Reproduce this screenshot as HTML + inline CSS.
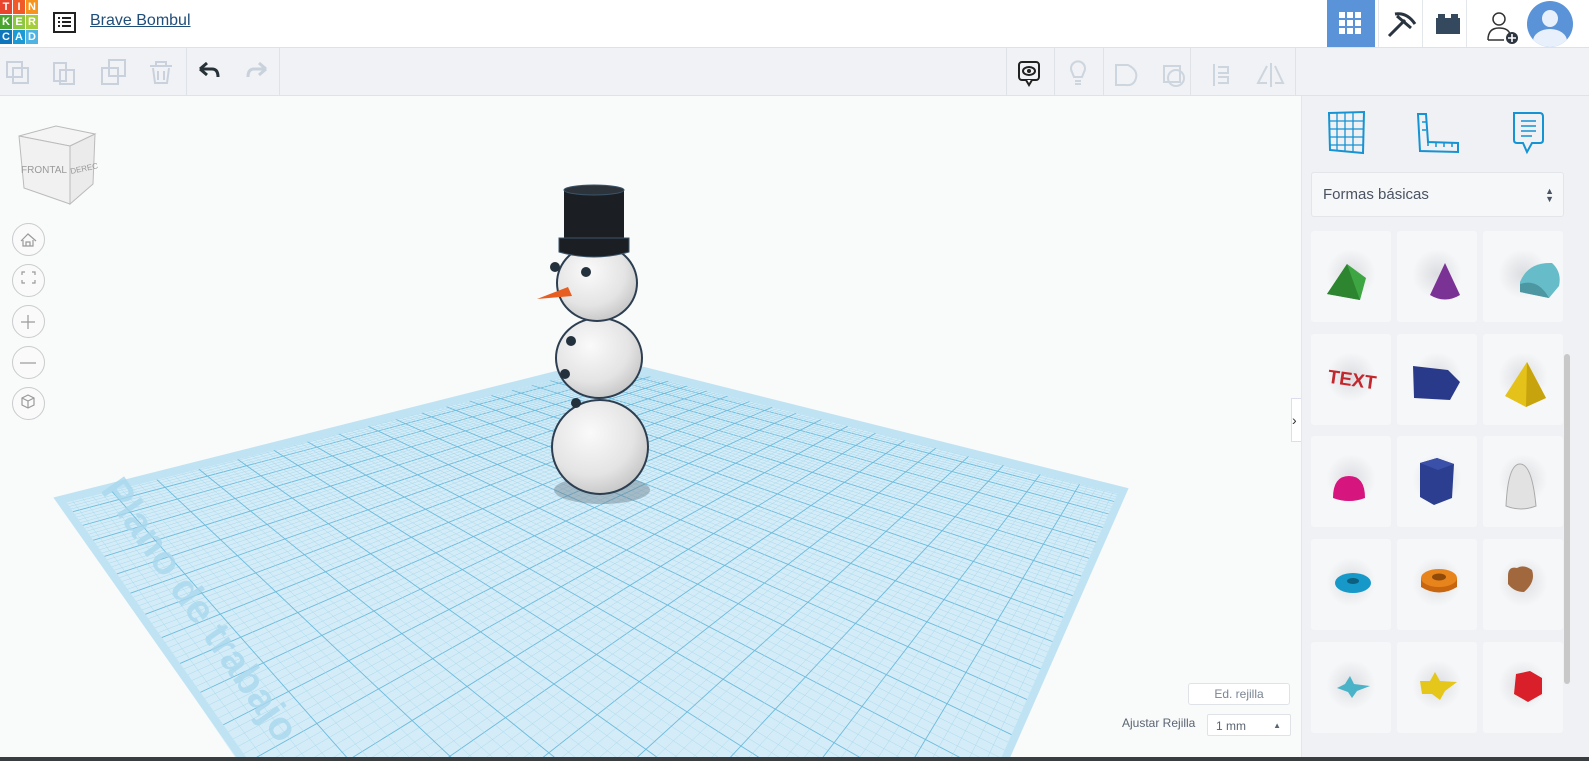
<!DOCTYPE html>
<html><head><meta charset="utf-8"><style>
*{box-sizing:border-box;margin:0;padding:0}
html{overflow:hidden;width:1589px;height:761px}
body{width:1589px;height:761px;overflow:hidden;background:#f9fafa;font-family:"Liberation Sans",sans-serif;position:relative}
.hdr{position:absolute;left:0;top:0;width:1589px;height:48px;background:#fff;border-bottom:1px solid #dde2e8}
.tb{position:absolute;left:0;top:48px;width:1589px;height:48px;background:#f1f2f5;border-bottom:1px solid #dfe3e8}
.logo{position:absolute;left:0;top:0;width:39px;height:45px}
.logo div{position:absolute;width:12px;height:14px;color:#fff;font-weight:bold;font-size:11px;text-align:center;line-height:14px}
.btn{position:absolute;top:56px;height:32px;border:1px solid #dde1e6;border-radius:3px;background:#f3f4f7;font-size:15px;color:#4a5361;text-align:center;line-height:30px}
.panel{position:absolute;left:1301px;top:96px;width:288px;height:661px;background:#f0f1f4;border-left:1px solid #e4e7ea;overflow:hidden}
.tile{position:absolute;width:80px;height:91px;background:#f6f7f9;border-radius:3px;overflow:hidden}
.tile::after{content:"";position:absolute;left:15px;top:18px;width:50px;height:50px;border-radius:50%;background:radial-gradient(circle,#dcdde0 0%,rgba(240,241,244,0) 70%)}
.nav{position:absolute;left:12px;width:33px;height:33px;border:1px solid #c9cbce;border-radius:50%;background:#fafafa}
</style></head><body>
<div class="hdr">
 <div class="logo">
  <div style="left:0;top:0;background:#e8442e">T</div><div style="left:13px;top:0;background:#f05a28">I</div><div style="left:26px;top:0;background:#f7941d">N</div>
  <div style="left:0;top:15px;background:#4aa52e">K</div><div style="left:13px;top:15px;background:#8dc63f">E</div><div style="left:26px;top:15px;background:#a6ce39">R</div>
  <div style="left:0;top:30px;background:#0f75bc">C</div><div style="left:13px;top:30px;background:#1c9ad6">A</div><div style="left:26px;top:30px;background:#4fb3e4">D</div>
 </div>
 <svg style="position:absolute;left:53px;top:12px" width="23" height="21"><rect x="1" y="1" width="21" height="19" fill="none" stroke="#222" stroke-width="2"/><g fill="#222"><rect x="5" y="5" width="2" height="2"/><rect x="9" y="5" width="9" height="2"/><rect x="5" y="9" width="2" height="2"/><rect x="9" y="9" width="9" height="2"/><rect x="5" y="13" width="2" height="2"/><rect x="9" y="13" width="9" height="2"/></g></svg>
 <div style="position:absolute;left:90px;top:12px;font-size:16px;color:#1f4e79;text-decoration:underline">Brave Bombul</div>
 <div style="position:absolute;left:1327px;top:0;width:48px;height:47px;background:#5b93d8"></div>
 <svg style="position:absolute;left:1339px;top:12px" width="24" height="24" fill="#fff"><rect x="0" y="0" width="6" height="6"/><rect x="8" y="0" width="6" height="6"/><rect x="16" y="0" width="6" height="6"/><rect x="0" y="8" width="6" height="6"/><rect x="8" y="8" width="6" height="6"/><rect x="16" y="8" width="6" height="6"/><rect x="0" y="16" width="6" height="6"/><rect x="8" y="16" width="6" height="6"/><rect x="16" y="16" width="6" height="6"/></svg>
 <svg style="position:absolute;left:1385px;top:10px" width="34" height="30"><path d="M4 26 L20 10 M10 4 Q22 2 30 14 M12 6 L26 18" stroke="#2a3440" stroke-width="3" fill="none"/></svg>
 <div style="position:absolute;left:1378px;top:0;width:1px;height:47px;background:#e3e6ea"></div>
 <div style="position:absolute;left:1422px;top:0;width:1px;height:47px;background:#e3e6ea"></div>
 <div style="position:absolute;left:1466px;top:0;width:1px;height:47px;background:#e3e6ea"></div>
 <svg style="position:absolute;left:1436px;top:14px" width="24" height="20" fill="#34495e"><rect x="0" y="4" width="24" height="16"/><rect x="2" y="0" width="7" height="5"/><rect x="15" y="0" width="7" height="5"/></svg>
 <svg style="position:absolute;left:1486px;top:10px" width="36" height="34"><circle cx="13" cy="9" r="6" fill="none" stroke="#333" stroke-width="1.5"/><path d="M2 30 Q2 18 13 18 Q22 18 24 24" fill="none" stroke="#333" stroke-width="1.5"/><path d="M2 30 H18" stroke="#333" stroke-width="1.5"/><circle cx="26" cy="28" r="6" fill="#2d3540"/><path d="M26 24 V32 M22 28 H30" stroke="#fff" stroke-width="1.6"/></svg>
 <div style="position:absolute;left:1527px;top:1px;width:46px;height:46px;border-radius:50%;background:#5b93d8;overflow:hidden"><div style="position:absolute;left:15px;top:9px;width:16px;height:17px;border-radius:50%;background:#e8f0fb"></div><div style="position:absolute;left:6px;top:28px;width:34px;height:24px;border-radius:50%;background:#e8f0fb"></div></div>
</div>
<div class="tb">
 <svg style="position:absolute;left:0;top:0" width="290" height="48" fill="none" stroke="#c9d2dc" stroke-width="2">
  <rect x="7" y="14" width="15" height="15"/><rect x="13" y="20" width="15" height="15"/>
  <rect x="54" y="15" width="12" height="18"/><rect x="60" y="22" width="14" height="14"/>
  <rect x="102" y="20" width="16" height="16"/><rect x="109" y="12" width="16" height="16"/>
  <path d="M150 18 H172 M156 18 V14 H166 V18 M153 20 L155 35 H167 L169 20 M158 23 V32 M164 23 V32"/>
 </svg>
 <svg style="position:absolute;left:196px;top:10px" width="80" height="28"><path d="M4 11 L11 5 M4 11 L11 17 M4 11 H16 Q22 11 22 19" fill="none" stroke="#263238" stroke-width="3"/><path d="M70 11 L63 5 M70 11 L63 17 M70 11 H58 Q52 11 52 19" fill="none" stroke="#c9d2dc" stroke-width="3"/></svg>
 <div style="position:absolute;left:186px;top:0;width:1px;height:47px;background:#dfe3e8"></div>
 <div style="position:absolute;left:279px;top:0;width:1px;height:47px;background:#dfe3e8"></div>
 <div style="position:absolute;left:1006px;top:0;width:1px;height:47px;background:#dfe3e8"></div>
 <div style="position:absolute;left:1054px;top:0;width:1px;height:47px;background:#dfe3e8"></div>
 <div style="position:absolute;left:1103px;top:0;width:1px;height:47px;background:#dfe3e8"></div>
 <div style="position:absolute;left:1190px;top:0;width:1px;height:47px;background:#dfe3e8"></div>
 <div style="position:absolute;left:1295px;top:0;width:1px;height:47px;background:#dfe3e8"></div>
 <svg style="position:absolute;left:1017px;top:12px" width="28" height="28"><rect x="2" y="2" width="20" height="18" rx="3" fill="none" stroke="#222" stroke-width="2"/><path d="M9 20 L12 25 L15 20" fill="#fff" stroke="#222" stroke-width="2"/><ellipse cx="12" cy="11" rx="6" ry="4" fill="none" stroke="#222" stroke-width="2"/><circle cx="12" cy="11" r="2" fill="#222"/></svg>
 <svg style="position:absolute;left:1066px;top:10px" width="230" height="30" fill="none" stroke="#cdd5de" stroke-width="2">
  <path d="M6 14 A7 7 0 1 1 18 14 L16 19 H8 Z M9 23 H15 M9 26 H15"/>
  <path d="M50 7 H62 Q72 12 70 20 Q68 28 60 27 H50 Z"/>
  <rect x="98" y="8" width="16" height="16"/><circle cx="110" cy="20" r="8"/>
  <path d="M148 6 V28 M152 9 H162 V15 H152 M152 19 H162 V25 H152"/>
  <path d="M205 5 V29 M201 8 L192 25 H201 M209 8 L217 25 H209"/>
 </svg>
 <div class="btn" style="left:1306px;width:81px">Importar</div>
 <div class="btn" style="left:1394px;width:81px">Exportar</div>
 <div class="btn" style="left:1482px;width:79px">Enviar a</div>
</div>

<div style="position:absolute;left:0;top:96px;width:1301px;height:661px;overflow:hidden">
<svg id="plane" style="position:absolute;left:0;top:0" width="1301" height="661" viewBox="0 96 1301 661">
 <polygon points="608,362 1123,491 1010,757 235,757 60,500" fill="#d4ecf7"/>
 <g id="gl"></g>
 <text x="0" y="0" transform="translate(100,490) rotate(55)" font-size="40" font-family="Liberation Sans" fill="#a9d8ee" font-weight="bold" opacity="0.8">Plano de trabajo</text>
 <ellipse cx="602" cy="490" rx="48" ry="14" fill="#6b7f8c" opacity="0.45"/>
 <defs>
  <radialGradient id="sg" cx="0.4" cy="0.35" r="0.75"><stop offset="0" stop-color="#fafafa"/><stop offset="0.6" stop-color="#e4e4e4"/><stop offset="1" stop-color="#bdbdbd"/></radialGradient>
 </defs>
 <ellipse cx="600" cy="447" rx="48" ry="47" fill="url(#sg)" stroke="#2c3e50" stroke-width="2"/>
 <ellipse cx="599" cy="358" rx="43" ry="40" fill="url(#sg)" stroke="#2c3e50" stroke-width="2"/>
 <ellipse cx="597" cy="283" rx="40" ry="38" fill="url(#sg)" stroke="#2c3e50" stroke-width="2"/>
 <circle cx="576" cy="403" r="5" fill="#23313d"/><circle cx="565" cy="374" r="5" fill="#23313d"/><circle cx="571" cy="341" r="5" fill="#23313d"/>
 <circle cx="586" cy="272" r="5" fill="#23313d"/><circle cx="555" cy="267" r="5" fill="#23313d"/>
 <path d="M537 299 L568 287 L572 296 Z" fill="#e85d20"/>
 <rect x="564" y="190" width="60" height="50" fill="#1b1f24"/>
 <ellipse cx="594" cy="190" rx="30" ry="5" fill="#2c333a" stroke="#3b5468"/>
 <path d="M559 238 H629 V252 Q594 262 559 252 Z" fill="#1b1f24" stroke="#3b5468"/>
</svg>
</div>

<svg style="position:absolute;left:14px;top:122px" width="84" height="86">
 <path d="M5 14 L42 4 L81 12 L56 24 Z" fill="#f4f4f4" stroke="#bbb"/>
 <path d="M5 14 L56 24 L56 82 L10 66 Z" fill="#f1f1f1" stroke="#bbb"/>
 <path d="M56 24 L81 12 L79 62 L56 82 Z" fill="#ebebeb" stroke="#bbb"/>
 <text x="7" y="51" font-size="10" fill="#999" font-family="Liberation Sans">FRONTAL</text>
 <text x="57" y="52" font-size="8" fill="#999" font-family="Liberation Sans" transform="rotate(-12 57 52)">DERECHA</text>
</svg>
<div class="nav" style="top:223px"></div><div class="nav" style="top:264px"></div><div class="nav" style="top:305px"></div><div class="nav" style="top:346px"></div><div class="nav" style="top:387px"></div>
<svg style="position:absolute;left:12px;top:223px" width="34" height="200" fill="none" stroke="#9a9a9a" stroke-width="1.2">
 <path d="M9 18 L16 11 L24 18 M11 17 V23 H21 V17 M14 23 V19 H18 V23"/>
 <path d="M10 52 V49 H13 M20 49 H23 V52 M23 57 V60 H20 M13 60 H10 V57"/>
 <path d="M16 92 V106 M9 99 H23"/>
 <path d="M8 140 H24"/>
 <path d="M16 172 L22 175 V182 L16 185 L10 182 V175 Z M10 175 L16 178 L22 175 M16 178 V185"/>
</svg>

<div style="position:absolute;left:1291px;top:398px;width:10px;height:44px;background:#fff;border:1px solid #dde;border-right:none;font-size:14px;line-height:42px;color:#333">›</div>

<div style="position:absolute;left:1188px;top:683px;width:102px;height:22px;border:1px solid #dfe2e6;border-radius:3px;background:#fff;font-size:12px;color:#7a8593;text-align:center;line-height:20px">Ed. rejilla</div>
<div style="position:absolute;left:1122px;top:716px;font-size:12px;color:#5a6573">Ajustar Rejilla</div>
<div style="position:absolute;left:1207px;top:714px;width:84px;height:22px;border:1px solid #dfe2e6;border-radius:2px;background:#fff;font-size:12px;color:#5a6573;padding-left:8px;line-height:22px">1 mm<span style="position:absolute;right:9px;top:0;font-size:8px">▲</span></div>

<div class="panel">
 <svg style="position:absolute;left:24px;top:14px" width="42" height="46" fill="none" stroke="#1693d2" stroke-width="2"><path d="M3 3 L38 2 L37 43 L4 40 Z"/><path d="M11 3 V41 M19 3 V42 M27 2 V42 M3 11 H38 M3 19 H38 M3 27 H38 M4 35 H37" stroke-width="1.3"/></svg>
 <svg style="position:absolute;left:112px;top:16px" width="48" height="44" fill="none" stroke="#1693d2" stroke-width="2"><path d="M4 2 L12 2 L14 30 L44 31 L44 40 L6 39 Z"/><path d="M14 34 V30 M22 35 V31 M30 35 V31 M38 35 V31 M8 10 H12 M8 18 H12" stroke-width="1.5"/></svg>
 <svg style="position:absolute;left:208px;top:14px" width="36" height="46" fill="none" stroke="#1693d2" stroke-width="2"><path d="M4 3 H30 Q33 3 33 7 V30 Q33 33 30 33 H22 L17 42 L13 33 H7 Q4 33 4 30 Z"/><path d="M11 11 H26 M11 16 H26 M11 21 H26 M11 26 H22" stroke-width="1.5"/></svg>
 <div style="position:absolute;left:9px;top:76px;width:253px;height:45px;background:#f6f7f9;border:1px solid #e2e5e9;border-radius:3px;font-size:15px;color:#4a5361;padding-left:11px;line-height:43px">Formas básicas<span style="position:absolute;right:9px;top:0;font-size:9px;line-height:8px;padding-top:14px">▲<br>▼</span></div>
 <div style="position:absolute;left:262px;top:258px;width:6px;height:330px;background:#c8c8c8;border-radius:3px"></div>
 <div class="tile" style="left:9px;top:135px"></div><div class="tile" style="left:95px;top:135px"></div><div class="tile" style="left:181px;top:135px"></div>
 <div class="tile" style="left:9px;top:238px"></div><div class="tile" style="left:95px;top:238px"></div><div class="tile" style="left:181px;top:238px"></div>
 <div class="tile" style="left:9px;top:340px"></div><div class="tile" style="left:95px;top:340px"></div><div class="tile" style="left:181px;top:340px"></div>
 <div class="tile" style="left:9px;top:443px"></div><div class="tile" style="left:95px;top:443px"></div><div class="tile" style="left:181px;top:443px"></div>
 <div class="tile" style="left:9px;top:546px"></div><div class="tile" style="left:95px;top:546px"></div><div class="tile" style="left:181px;top:546px"></div>
 <svg style="position:absolute;left:0;top:0" width="288" height="661">
  <path d="M25 198 L45 168 L64 182 L58 204 Z" fill="#3da541"/><path d="M25 198 L45 168 L50 182 L58 204 Z" fill="#2d8530"/>
  <path d="M143 167 L128 199 Q143 208 158 199 Z" fill="#7b3295"/>
  <path d="M218 186 Q226 166 250 167 Q260 176 257 190 L247 202 L218 196 Z" fill="#66bcc8"/><path d="M218 188 Q236 182 247 202 L218 196 Z" fill="#4c97a2"/>
  <text x="26" y="290" font-size="19" font-weight="bold" fill="#c1272d" font-family="Liberation Sans" transform="rotate(8 50 282)">TEXT</text>
  <path d="M111 270 L146 274 L158 286 L148 304 L112 302 Z" fill="#2a3a8a"/>
  <path d="M225 266 L203 300 L224 311 L244 302 Z" fill="#e5c21a"/><path d="M225 266 L224 311 L244 302 Z" fill="#c7a30e"/>
  <path d="M31 402 Q31 380 47 380 Q63 380 63 402 Q47 408 31 402 Z" fill="#d6157f"/>
  <path d="M118 367 L135 362 L152 368 L150 402 L132 409 L118 401 Z" fill="#2c3e8f"/><path d="M118 367 L135 362 L152 368 L136 374 Z" fill="#3b50a8"/>
  <path d="M204 410 Q206 368 218 368 Q230 368 234 410 Q219 416 204 410 Z" fill="#e2e2e2" stroke="#aaa"/>
  <ellipse cx="51" cy="487" rx="18" ry="10" fill="#1698c9"/><ellipse cx="51" cy="485" rx="6" ry="3" fill="#0c5f7f"/>
  <path d="M119 482 V491 Q137 502 155 491 V482 Z" fill="#c8650f"/><ellipse cx="137" cy="482" rx="18" ry="9" fill="#e8841c"/><ellipse cx="137" cy="481" rx="7" ry="3.5" fill="#8f4a0a"/>
  <path d="M206 480 Q206 470 215 472 Q222 468 230 474 Q234 486 222 496 Q212 496 206 488 Z" fill="#a0683c"/>
  <path d="M35 592 L43 588 L48 580 L52 588 L68 590 L55 595 L50 602 L46 596 Z" fill="#4bb3c7"/>
  <path d="M118 585 L128 585 L133 576 L138 585 L155 586 L143 595 L138 604 L130 598 L120 598 Z" fill="#e5c71c"/>
  <path d="M214 578 L228 575 L240 582 L240 598 L226 606 L212 598 Z" fill="#d81f2a"/>
 </svg>
</div>
<div style="position:absolute;left:0;top:757px;width:1589px;height:4px;background:#3a3d40"></div>
<script>
(function(){
var P=[[608,362],[1123,491],[712,1425],[60,500]];
var x0=P[0][0],y0=P[0][1],x1=P[1][0],y1=P[1][1],x2=P[2][0],y2=P[2][1],x3=P[3][0],y3=P[3][1];
var dx1=x1-x2,dx2=x3-x2,dx3=x0-x1+x2-x3,dy1=y1-y2,dy2=y3-y2,dy3=y0-y1+y2-y3;
var den=dx1*dy2-dx2*dy1,g=(dx3*dy2-dx2*dy3)/den,h=(dx1*dy3-dx3*dy1)/den;
var a=x1-x0+g*x1,b=x3-x0+h*x3,c=x0,d=y1-y0+g*y1,e=y3-y0+h*y3,f=y0;
function m(u,v){var w=g*u+h*v+1;return [((a*u+b*v+c)/w).toFixed(1),((d*u+e*v+f)/w).toFixed(1)];}
var s="";var N=100;
for(var i=0;i<=N;i++){var t=i/N;var maj=i%5==0;
 var col=maj?"#6cbbdd":"#a9d9ee",sw=maj?0.9:0.5;
 var p=m(t,0),q=m(t,1),r=m(0,t),u=m(1,t);
 s+='<line x1="'+p[0]+'" y1="'+p[1]+'" x2="'+q[0]+'" y2="'+q[1]+'" stroke="'+col+'" stroke-width="'+sw+'"/>';
 s+='<line x1="'+r[0]+'" y1="'+r[1]+'" x2="'+u[0]+'" y2="'+u[1]+'" stroke="'+col+'" stroke-width="'+sw+'"/>';}
var A=m(0,0),B=m(1,0),C=m(1,1),D=m(0,1);
s+='<polygon points="'+A.join(",")+' '+B.join(",")+' '+C.join(",")+' '+D.join(",")+'" fill="none" stroke="#bfe3f3" stroke-width="8"/>';
document.getElementById("gl").innerHTML=s;
})();
</script>
</body></html>
